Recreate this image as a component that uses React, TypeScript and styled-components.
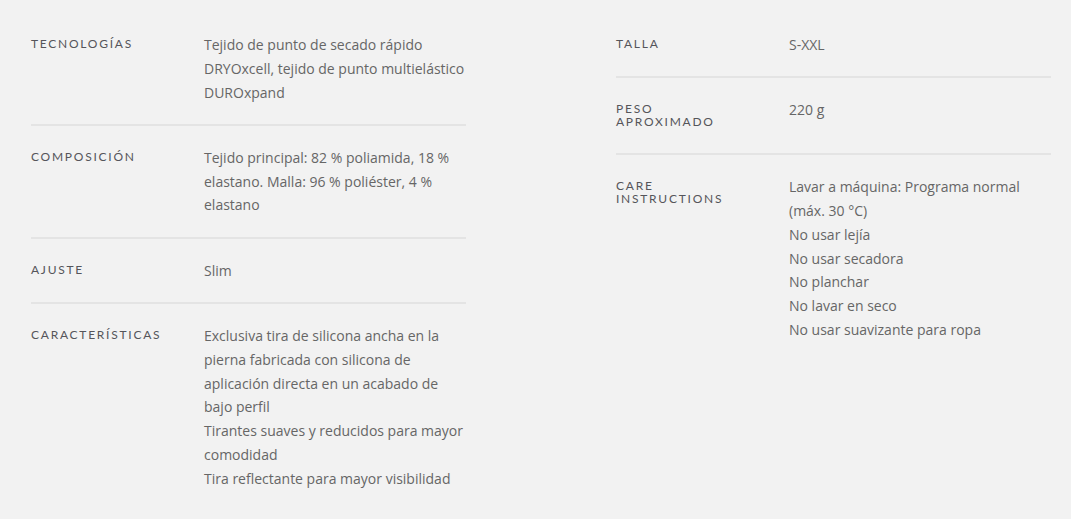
import React from "react";
import styled, { createGlobalStyle } from "styled-components";

const Global = createGlobalStyle`
  html, body { margin: 0; padding: 0; background: #f2f2f2; }
  body { font-family: "Open Sans", "Liberation Sans", sans-serif; }
`;

const Page = styled.div`
  display: grid;
  grid-template-columns: 435px 435px;
  column-gap: 150px;
  align-items: start;
  padding: 13px 20px 0 31px;
  background: #f2f2f2;
  min-height: 519px;
  box-sizing: border-box;
`;

const Column = styled.div`
  display: flex;
  flex-direction: column;
`;

const Row = styled.div`
  display: flex;
  align-items: flex-start;
  padding: 20px 0 19.5px;
  & + & {
    border-top: 2px solid #e4e4e4;
  }
`;

const Label = styled.div`
  flex: 0 0 173px;
  box-sizing: border-box;
  padding: 4px 0 5.5px;
  font-family: Lato, "DejaVu Sans", sans-serif;
  font-size: 12px;
  line-height: 13px;
  letter-spacing: 1.75px;
  text-transform: uppercase;
  color: #55555a;
`;

const Value = styled.div`
  flex: 1 1 auto;
  font-family: "Open Sans", "Liberation Sans", sans-serif;
  font-size: 14px;
  line-height: 1.7;
  color: #666666;
`;

const Line = styled.div``;

type Item = { label: React.ReactNode; lines: string[] };

const left: Item[] = [
  {
    label: "Tecnologías",
    lines: ["Tejido de punto de secado rápido DRYOxcell, tejido de punto multielástico DUROxpand"],
  },
  {
    label: "Composición",
    lines: ["Tejido principal: 82 % poliamida, 18 % elastano. Malla: 96 % poliéster, 4 % elastano"],
  },
  { label: "Ajuste", lines: ["Slim"] },
  {
    label: "Características",
    lines: [
      "Exclusiva tira de silicona ancha en la pierna fabricada con silicona de aplicación directa en un acabado de bajo perfil",
      "Tirantes suaves y reducidos para mayor comodidad",
      "Tira reflectante para mayor visibilidad",
    ],
  },
];

const right: Item[] = [
  { label: "Talla", lines: ["S-XXL"] },
  { label: <>Peso<br />aproximado</>, lines: ["220 g"] },
  {
    label: <>Care<br />instructions</>,
    lines: [
      "Lavar a máquina: Programa normal (máx. 30 °C)",
      "No usar lejía",
      "No usar secadora",
      "No planchar",
      "No lavar en seco",
      "No usar suavizante para ropa",
    ],
  },
];

const SpecColumn = ({ items }: { items: Item[] }) => (
  <Column>
    {items.map((it, i) => (
      <Row key={i}>
        <Label>{it.label}</Label>
        <Value>
          {it.lines.map((l, j) => (
            <Line key={j}>{l}</Line>
          ))}
        </Value>
      </Row>
    ))}
  </Column>
);

export default function App() {
  return (
    <>
      <Global />
      <Page>
        <SpecColumn items={left} />
        <SpecColumn items={right} />
      </Page>
    </>
  );
}
